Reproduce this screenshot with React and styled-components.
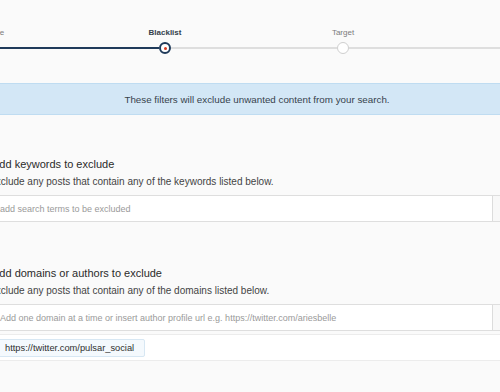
import React from 'react';
import styled, { createGlobalStyle } from 'styled-components';

const GlobalStyle = createGlobalStyle`
  html, body {
    margin: 0;
    padding: 0;
    background: #fafafa;
    overflow: hidden;
    font-family: "Liberation Sans", Arial, Helvetica, sans-serif;
  }
`;

const steps = [
  { label: 'Compose', state: 'done' },
  { label: 'Blacklist', state: 'current' },
  { label: 'Target', state: 'todo' },
  { label: 'Review', state: 'todo' },
];

const App = () => (
  <>
    <GlobalStyle />
    <Page>
      <Stepper>
        {steps.map((step, i) => (
          <Step key={step.label}>
            <StepLabel $state={step.state}>{step.label}</StepLabel>
            <Track>
              <Line $on={step.state !== 'todo'} $hidden={i === 0} />
              <Dot $state={step.state} />
              <Line $on={step.state === 'done'} $hidden={i === steps.length - 1} />
            </Track>
          </Step>
        ))}
      </Stepper>

      <Content>
        <Notice>These filters will exclude unwanted content from your search.</Notice>

        {/* keywords */}
        <Section>
          <Title>Add keywords to exclude</Title>
          <Hint>Exclude any posts that contain any of the keywords listed below.</Hint>
          <InputGroup>
            <Field placeholder='add search terms to be excluded' />
            <Addon />
          </InputGroup>
        </Section>

        {/* domains / authors */}
        <Section>
          <Title>Add domains or authors to exclude</Title>
          <Hint>Exclude any posts that contain any of the domains listed below.</Hint>
          <InputGroup>
            <Field placeholder='Add one domain at a time or insert author profile url e.g. https://twitter.com/ariesbelle' />
            <Addon />
          </InputGroup>
          <TagBox>
            <Tag>https://twitter.com/pulsar_social</Tag>
          </TagBox>
        </Section>
      </Content>
    </Page>
  </>
);

export default App;

const Page = styled.div`
  width: 500px;
  height: 392px;
  overflow: hidden;
`;

const Stepper = styled.div`
  display: flex;
  margin-left: -102px;
  padding-top: 27px;
`;

const Step = styled.div`
  flex: 0 0 178px;
  display: flex;
  flex-direction: column;
  align-items: center;
`;

const StepLabel = styled.div`
  font-size: 8px;
  line-height: 11px;
  height: 11px;
  color: ${(p) => (p.$state === 'current' ? '#34404b' : '#7a7a7a')};
  font-weight: ${(p) => (p.$state === 'current' ? 600 : 400)};
`;

const Track = styled.div`
  margin-top: 3px;
  width: 100%;
  height: 14px;
  display: flex;
  align-items: center;
`;

const Line = styled.div`
  flex: 1;
  height: ${(p) => (p.$on ? '2px' : '1.5px')};
  background: ${(p) => (p.$hidden ? 'transparent' : p.$on ? '#1f3a5a' : '#dedede')};
`;

const Dot = styled.div`
  box-sizing: border-box;
  width: 12px;
  height: 12px;
  border-radius: 50%;
  background: #fff;
  border: ${(p) => (p.$state === 'todo' ? '1.5px solid #cfcfcf' : '2px solid #1f3a5a')};
  display: flex;
  align-items: center;
  justify-content: center;
  &::after {
    content: '';
    width: 3px;
    height: 3px;
    border-radius: 50%;
    background: ${(p) => (p.$state === 'current' ? '#d8391f' : 'transparent')};
  }
`;

const Content = styled.div`
  margin-left: -11px;
  width: 536px;
  margin-top: 28px;
`;

const Notice = styled.div`
  height: 30px;
  display: flex;
  align-items: center;
  justify-content: center;
  background: #d3e7f6;
  border-top: 1px solid #bfdcf1;
  border-bottom: 1px solid #bfdcf1;
  color: #37434d;
  font-size: 9.8px;
`;

const Section = styled.div`
  margin-top: 42px;
  & + & {
    margin-top: 44px;
  }
`;

const Title = styled.div`
  padding-left: 3px;
  font-size: 11px;
  line-height: 14px;
  color: #2a2a2a;
`;

const Hint = styled.div`
  margin-top: 4px;
  font-size: 10px;
  line-height: 13px;
  color: #444;
`;

const InputGroup = styled.div`
  margin-top: 7px;
  display: grid;
  grid-template-columns: 1fr 32px;
  height: 27px;
  box-sizing: border-box;
  border: 1px solid #dedede;
  background: #fff;
`;

const Field = styled.input`
  border: none;
  outline: none;
  background: transparent;
  padding: 0 0 0 10px;
  font-family: inherit;
  font-size: 9px;
  color: #333;
  &::placeholder {
    color: #9a9a9a;
  }
`;

const Addon = styled.div`
  border-left: 1px solid #dcdcdc;
  background: #f8f8f8;
`;

const TagBox = styled.div`
  margin-top: 3px;
  padding: 3px 4px;
  height: 27px;
  box-sizing: border-box;
  background: #fff;
  border: 1px solid #ececec;
  display: flex;
  align-items: center;
`;

const Tag = styled.span`
  height: 18px;
  box-sizing: border-box;
  display: inline-flex;
  align-items: center;
  padding: 0 10px;
  background: #f4f9fd;
  border: 1px solid #d7e7f3;
  border-radius: 2px;
  font-size: 9.3px;
  color: #2f2f2f;
`;
